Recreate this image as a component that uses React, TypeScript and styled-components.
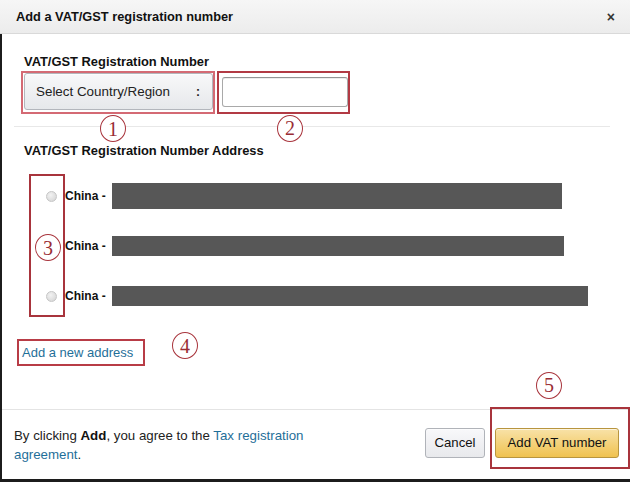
import React from "react";
import styled, { createGlobalStyle } from "styled-components";

const Global = createGlobalStyle`
  html, body { margin: 0; padding: 0; background: #fff; }
  body { font-family: "Liberation Sans", Arial, sans-serif; color: #111; }
  * { box-sizing: border-box; }
`;

const Dialog = styled.div`
  width: 630px;
  height: 482px;
  display: flex;
  flex-direction: column;
  overflow: hidden;
  background: #fff;
`;

const Header = styled.header`
  height: 34px;
  flex: none;
  display: flex;
  align-items: center;
  justify-content: space-between;
  padding: 0 15px 0 16px;
  background: linear-gradient(#f6f6f6, #ececec);
  border-bottom: 1px solid #d9d9d9;
`;

const Title = styled.h1`
  margin: 0;
  font-size: 12.8px;
  font-weight: 700;
  color: #111;
`;

const Close = styled.button`
  border: 0;
  background: none;
  padding: 0;
  font: 700 14px "Liberation Sans", Arial, sans-serif;
  color: #333;
  line-height: 1;
`;

const Main = styled.div`
  flex: 1;
  display: flex;
  flex-direction: column;
  border-left: 2px solid #1c1c1c;
  border-bottom: 3px solid #1c1c1c;
`;

const Body = styled.section`
  flex: 1;
  display: flex;
  flex-direction: column;
  padding: 20px 20px 0 22px;
`;

const Label = styled.div<{ $top?: number }>`
  font-size: 12.9px;
  line-height: 16px;
  font-weight: 700;
  color: #111;
  margin-top: ${(p) => p.$top ?? 0}px;
`;

const FieldRow = styled.div`
  display: flex;
  align-items: center;
  gap: 9px;
  margin-top: 3px;
`;

const Marked = styled.div`
  position: relative;
  display: flex;
`;

const Frame = styled.span<{ $l: number; $r?: number; $w?: number; $t: number; $b: number; $c?: string }>`
  position: absolute;
  left: ${(p) => p.$l}px;
  ${(p) => (p.$w !== undefined ? `width: ${p.$w}px;` : `right: ${p.$r ?? 0}px;`)}
  top: ${(p) => p.$t}px;
  bottom: ${(p) => p.$b}px;
  border: 2px solid ${(p) => p.$c ?? "#c4505a"};
  pointer-events: none;
`;

const Callout = styled.span<{ $x: number; $y: number }>`
  position: absolute;
  left: ${(p) => p.$x}px;
  top: ${(p) => p.$y}px;
  width: 26px;
  height: 27px;
  border: 1.5px solid #a8343c;
  border-radius: 50%;
  background: #fff;
  display: flex;
  align-items: center;
  justify-content: center;
  font: 400 20px "Liberation Serif", "Times New Roman", serif;
  color: #9a2d35;
  line-height: 1;
  z-index: 2;
`;

const Select = styled.div`
  width: 189px;
  height: 37px;
  display: flex;
  align-items: center;
  justify-content: space-between;
  padding: 0 12px 0 11px;
  background: linear-gradient(#f8f8f9, #e6e8eb);
  border: 1px solid #b3b6bc;
  border-radius: 3px;
  box-shadow: 0 1px 0 rgba(255, 255, 255, 0.6) inset;
  font-size: 13.4px;
  color: #222;
`;

const Dots = styled.span`
  font-weight: 700;
  font-size: 12px;
`;

const TextInput = styled.input`
  width: 126px;
  height: 30px;
  border: 1px solid #a9a9a9;
  border-top-color: #949494;
  border-radius: 3px;
  box-shadow: 0 1px 0 rgba(0, 0, 0, 0.07) inset;
  background: #fff;
  outline: none;
`;

const Divider = styled.hr`
  margin: 16px 0 0 -10px;
  border: 0;
  border-top: 1px solid #e8e8e8;
  height: 0;
`;

const RadioList = styled.div`
  position: relative;
  display: flex;
  flex-direction: column;
  gap: 24px;
  margin-top: 24px;
`;

const RadioRow = styled.label`
  height: 26px;
  display: flex;
  align-items: center;
  padding-left: 22px;
`;

const Radio = styled.input`
  appearance: none;
  margin: 0 8px 0 0;
  width: 11px;
  height: 11px;
  border-radius: 50%;
  border: 1px solid #c6c6c6;
  background: radial-gradient(circle at 40% 35%, #f2f2f2, #d2d2d2);
`;

const Country = styled.span`
  font-size: 12px;
  font-weight: 700;
  color: #111;
  margin-right: 6px;
`;

const Redacted = styled.span<{ $w: number; $h: number }>`
  width: ${(p) => p.$w}px;
  height: ${(p) => p.$h}px;
  background: #575757;
`;

const LinkWrap = styled.div`
  position: relative;
  align-self: flex-start;
  display: flex;
  margin: 36px 0 0 -2px;
`;

const Link = styled.a`
  font-size: 13px;
  line-height: 16px;
  color: #1f6f99;
  text-decoration: none;
`;

const Footer = styled.footer`
  height: 70px;
  flex: none;
  display: flex;
  align-items: center;
  justify-content: space-between;
  padding: 0 11px 0 12px;
  border-top: 1px solid #e4e4e4;
`;

const Legal = styled.p`
  margin: 0;
  width: 310px;
  font-size: 13.3px;
  line-height: 19px;
  color: #222;
  b { font-weight: 700; color: #111; }
  a { color: #1f6f99; text-decoration: none; }
`;

const Actions = styled.div`
  display: flex;
  gap: 10px;
  margin-top: -4px;
`;

const Button = styled.button<{ $primary?: boolean }>`
  position: relative;
  height: 30px;
  width: ${(p) => (p.$primary ? 124 : 60)}px;
  border-radius: 3px;
  font: 400 13.2px "Liberation Sans", Arial, sans-serif;
  color: #111;
  padding: 0;
  border: 1px solid ${(p) => (p.$primary ? "#b8953e" : "#b0b3b9")};
  background: ${(p) =>
    p.$primary ? "linear-gradient(#f8e2a8, #f0c24f)" : "linear-gradient(#f8f8fa, #e8e9ec)"};
  box-shadow: 0 1px 0 rgba(255, 255, 255, 0.6) inset;
`;

const rows = [
  { w: 450, h: 26 },
  { w: 452, h: 20 },
  { w: 476, h: 20 },
];

export default function App() {
  return (
    <>
      <Global />
      <Dialog>
        <Header>
          <Title>Add a VAT/GST registration number</Title>
          <Close aria-label="Close">×</Close>
        </Header>
        <Main>
          <Body>
            <Label>VAT/GST Registration Number</Label>
            <FieldRow>
              <Marked>
                <Select>
                  <span>Select Country/Region</span>
                  <Dots>:</Dots>
                </Select>
                <Frame $l={-3} $r={-2} $t={-2} $b={-4} $c="#d46a74" />
                <Callout $x={76} $y={42}>1</Callout>
              </Marked>
              <Marked>
                <TextInput />
                <Frame $l={-5} $r={-2} $t={-6} $b={-7} $c="#b23a44" />
                <Callout $x={55} $y={38}>2</Callout>
              </Marked>
            </FieldRow>
            <Divider />
            <Label $top={16}>VAT/GST Registration Number Address</Label>
            <RadioList>
              {rows.map((r, i) => (
                <RadioRow key={i}>
                  <Radio type="radio" name="addr" />
                  <Country>China -</Country>
                  <Redacted $w={r.w} $h={r.h} />
                </RadioRow>
              ))}
              <Frame $l={5} $w={36} $t={-9} $b={-8} $c="#a8343c" />
              <Callout $x={11} $y={51}>3</Callout>
            </RadioList>
            <LinkWrap>
              <Link href="#">Add a new address</Link>
              <Frame $l={-5} $r={-12} $t={-6} $b={-5} $c="#b83c46" />
              <Callout $x={150} $y={-13}>4</Callout>
            </LinkWrap>
          </Body>
          <Footer>
            <Legal>
              By clicking <b>Add</b>, you agree to the <a href="#">Tax registration agreement</a>.
            </Legal>
            <Actions>
              <Button>Cancel</Button>
              <Button $primary>
                Add VAT number
                <Frame $l={-6} $r={-12} $t={-22} $b={-12} $c="#a8343c" />
                <Callout $x={40} $y={-57}>5</Callout>
              </Button>
            </Actions>
          </Footer>
        </Main>
      </Dialog>
    </>
  );
}
